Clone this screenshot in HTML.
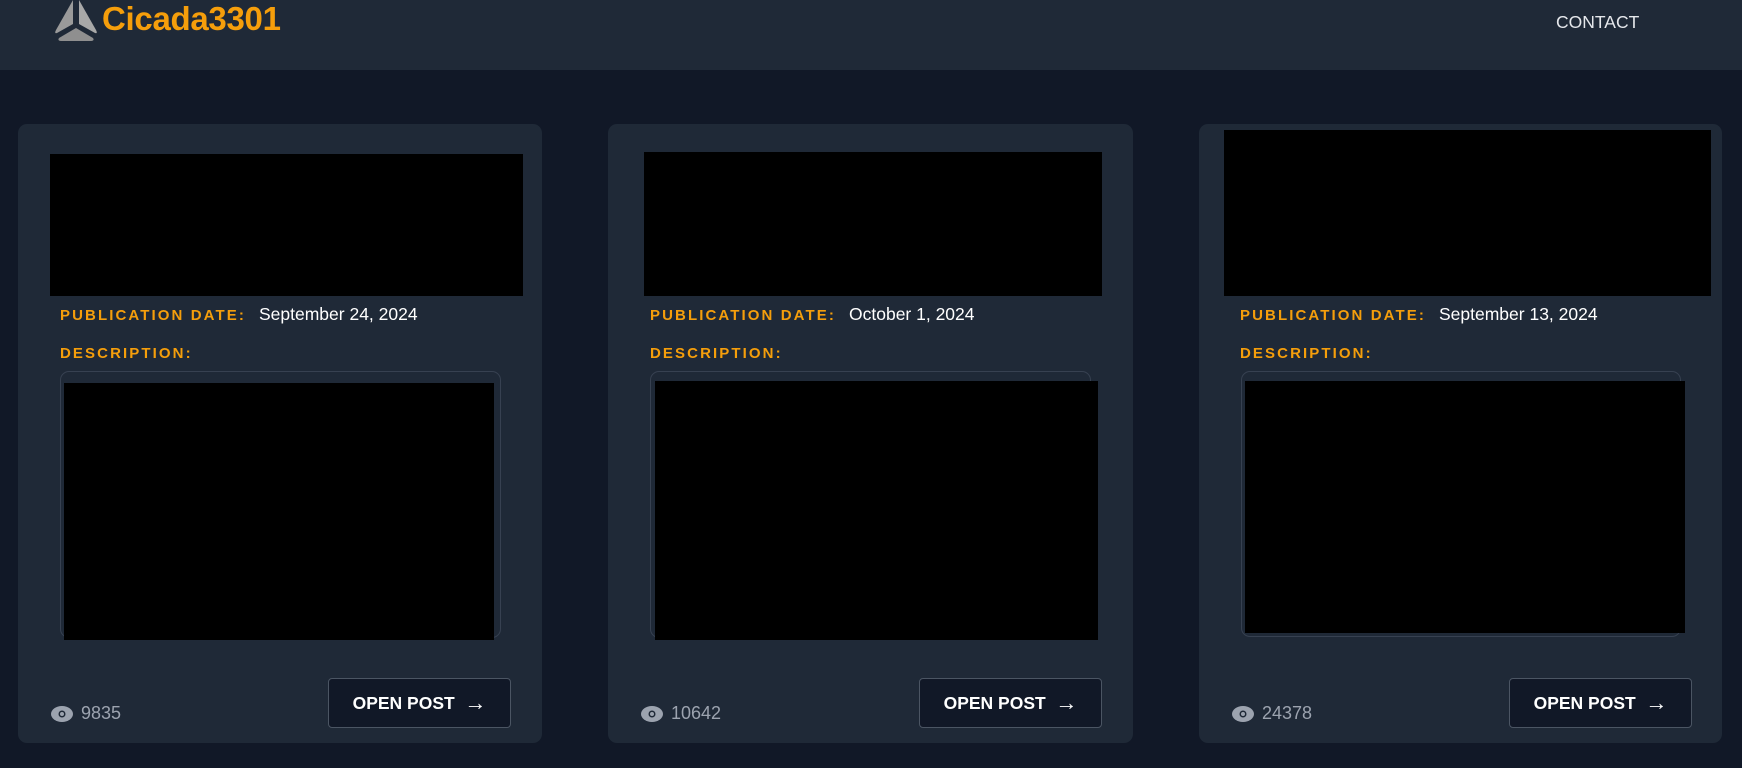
<!DOCTYPE html>
<html><head><meta charset="utf-8"><style>
*{margin:0;padding:0;box-sizing:border-box}
body{width:1742px;height:768px;background:#111827;font-family:"Liberation Sans",sans-serif;position:relative;overflow:hidden}
.hdr{position:absolute;left:0;top:0;width:1742px;height:70px;background:#1f2937}
.logo{position:absolute;left:102px;top:0px;font-size:33px;font-weight:bold;color:#f59e0b;letter-spacing:-0.3px}
.contact{position:absolute;left:1556px;top:12px;font-size:17.5px;color:#e5e7eb;font-weight:500}
.card{position:absolute;top:124px;height:619px;background:#1f2937;border-radius:9px}
.abs{position:absolute}
.blk{position:absolute;background:#000}
.lbl{position:absolute;color:#f59e0b;font-weight:bold;font-size:15px;letter-spacing:2.1px}
.val{position:absolute;color:#fff;font-size:17.5px}
.box{position:absolute;border:1.5px solid #374151;border-radius:9px}
.btn{position:absolute;top:678px;width:183px;height:50px;background:#111827;border:1px solid #4b5563;border-radius:4px;color:#fff;font-size:17.5px;font-weight:bold;text-align:center;line-height:48px}
.btn span{font-size:22px;font-weight:normal;vertical-align:-1px}
.views{position:absolute;top:703px;color:#9ca3af;font-size:18px;display:flex;align-items:center;gap:8px}
</style></head><body>
<div class="hdr"></div>
<svg class="abs" style="left:53px;top:0" width="46" height="42" viewBox="0 0 46 42"><path d="M20 0 L3 30 Q1 34 4 33 L20 24 Z" fill="#9a9a9a"/><path d="M26 0 L43 30 Q45 34 42 33 L26 24 Z" fill="#a8a8a8"/><path d="M23 28 L6 38 Q4 41 9 41 L37 41 Q42 41 40 38 Z" fill="#8f8f8f"/></svg>
<div class="logo">Cicada3301</div>
<div class="contact">CONTACT</div>

<div class="card" style="left:18px;width:524px"></div>
<div class="card" style="left:608px;width:525px"></div>
<div class="card" style="left:1199px;width:523px"></div>

<div class="blk" style="left:50px;top:154px;width:473px;height:142px"></div>
<div class="blk" style="left:644px;top:152px;width:458px;height:144px"></div>
<div class="blk" style="left:1224px;top:130px;width:487px;height:166px"></div>

<div class="lbl" style="left:60px;top:307px">PUBLICATION DATE:</div><div class="val" style="left:259px;top:304px">September 24, 2024</div>
<div class="lbl" style="left:650px;top:307px">PUBLICATION DATE:</div><div class="val" style="left:849px;top:304px">October 1, 2024</div>
<div class="lbl" style="left:1240px;top:307px">PUBLICATION DATE:</div><div class="val" style="left:1439px;top:304px">September 13, 2024</div>
<div class="lbl" style="left:60px;top:345px">DESCRIPTION:</div>
<div class="lbl" style="left:650px;top:345px">DESCRIPTION:</div>
<div class="lbl" style="left:1240px;top:345px">DESCRIPTION:</div>

<div class="box" style="left:60px;top:371px;width:441px;height:267px"></div>
<div class="blk" style="left:64px;top:383px;width:430px;height:257px"></div>
<div class="box" style="left:650px;top:371px;width:441px;height:267px"></div>
<div class="blk" style="left:655px;top:381px;width:443px;height:259px"></div>
<div class="box" style="left:1241px;top:371px;width:440px;height:266px"></div>
<div class="blk" style="left:1245px;top:381px;width:440px;height:252px"></div>

<div class="btn" style="left:328px">OPEN POST &nbsp;<span>→</span></div>
<div class="btn" style="left:919px">OPEN POST &nbsp;<span>→</span></div>
<div class="btn" style="left:1509px">OPEN POST &nbsp;<span>→</span></div>

<div class="views" style="left:51px"><svg width="22" height="16" viewBox="0 0 22 16"><ellipse cx="11" cy="8" rx="11" ry="8" fill="#9ca3af"/><circle cx="11" cy="8" r="3.5" fill="#1f2937"/><circle cx="11" cy="8" r="2" fill="#9ca3af"/></svg>9835</div>
<div class="views" style="left:641px"><svg width="22" height="16" viewBox="0 0 22 16"><ellipse cx="11" cy="8" rx="11" ry="8" fill="#9ca3af"/><circle cx="11" cy="8" r="3.5" fill="#1f2937"/><circle cx="11" cy="8" r="2" fill="#9ca3af"/></svg>10642</div>
<div class="views" style="left:1232px"><svg width="22" height="16" viewBox="0 0 22 16"><ellipse cx="11" cy="8" rx="11" ry="8" fill="#9ca3af"/><circle cx="11" cy="8" r="3.5" fill="#1f2937"/><circle cx="11" cy="8" r="2" fill="#9ca3af"/></svg>24378</div>
</body></html>
